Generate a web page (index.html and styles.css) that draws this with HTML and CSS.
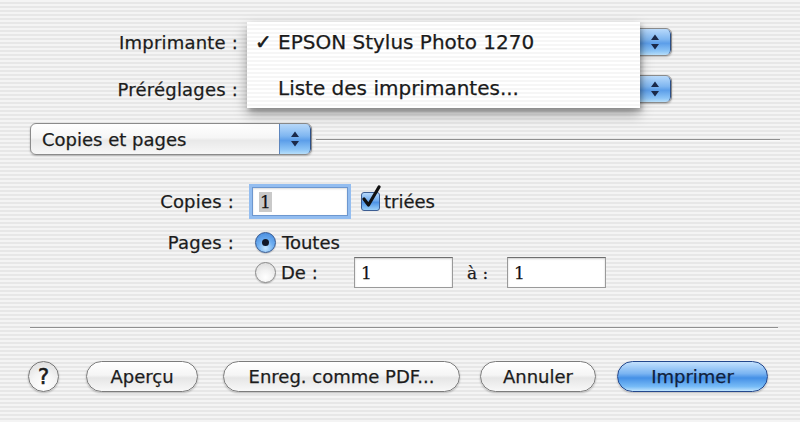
FILE: index.html
```html
<!DOCTYPE html>
<html lang="fr">
<head>
<meta charset="utf-8">
<title>Imprimer</title>
<link rel="stylesheet" href="styles.css">
</head>
<body>
<div class="win">
  <div class="row top first">
    <div class="lbl">Imprimante :</div>
    <div class="popup wide"><span class="ptext"></span><span class="step"><svg width="10" height="20" viewBox="0 0 10 20"><path d="M5 2.5 L9 8 L1 8 Z M5 17.5 L9 12 L1 12 Z" fill="#1b2a4a"/></svg></span></div>
  </div>
  <div class="row top second">
    <div class="lbl">Préréglages :</div>
    <div class="popup wide"><span class="ptext"></span><span class="step"><svg width="10" height="20" viewBox="0 0 10 20"><path d="M5 2.5 L9 8 L1 8 Z M5 17.5 L9 12 L1 12 Z" fill="#1b2a4a"/></svg></span></div>
  </div>
  <div class="row pane">
    <div class="popup narrow"><span class="ptext">Copies et pages</span><span class="step"><svg width="10" height="20" viewBox="0 0 10 20"><path d="M5 2.5 L9 8 L1 8 Z M5 17.5 L9 12 L1 12 Z" fill="#1b2a4a"/></svg></span></div>
    <div class="rule"></div>
  </div>

  <div class="form">
    <div class="frow copies">
      <div class="flbl">Copies :</div>
      <div class="ctrls">
        <div class="field focus"><span class="sel">1</span></div>
        <span class="check"><svg width="22" height="26" viewBox="0 0 22 26"><path d="M4 14 L8.5 20 L19 2" fill="none" stroke="#111" stroke-width="3.2" stroke-linecap="round" stroke-linejoin="round"/></svg></span>
        <span class="ctext">triées</span>
      </div>
    </div>
    <div class="frow pages">
      <div class="flbl">Pages :</div>
      <div class="ctrls">
        <span class="radio on"><span class="dot"></span></span>
        <span class="ctext">Toutes</span>
      </div>
    </div>
    <div class="frow de">
      <div class="flbl"></div>
      <div class="ctrls">
        <span class="radio"></span>
        <span class="ctext de-lbl">De :</span>
        <div class="field f2">1</div>
        <span class="ctext a-lbl">à :</span>
        <div class="field f2">1</div>
      </div>
    </div>
  </div>

  <div class="sep"></div>

  <div class="buttons">
    <span class="help">?</span>
    <span class="btn b-apercu">Aperçu</span>
    <span class="btn b-pdf">Enreg. comme PDF...</span>
    <span class="btn b-annuler">Annuler</span>
    <span class="btn default b-imprimer">Imprimer</span>
  </div>

  <div class="menu">
    <div class="mitem"><span class="mcheck">✓</span>EPSON Stylus Photo 1270</div>
    <div class="mitem"><span class="mcheck"></span>Liste des imprimantes...</div>
  </div>
</div>
</body>
</html>
```

FILE: styles.css
```css
* { box-sizing: border-box; }
html, body { margin: 0; padding: 0; }
body {
  width: 800px;
  height: 422px;
  overflow: hidden;
  font-family: "DejaVu Sans", "Liberation Sans", sans-serif;
  font-size: 18px;
  color: #1c1c1c;
  -webkit-text-stroke: 0.25px #1c1c1c;
  background: repeating-linear-gradient(to bottom, #f4f4f4 0 2px, #e7e7e7 2px 4px);
}
.win {
  position: relative;
  width: 800px;
  height: 422px;
  display: flex;
  flex-direction: column;
}
.row { display: flex; align-items: center; }
.row.top { height: 28px; }
.row.top.first { margin-top: 28px; }
.row.top.second { margin-top: 19px; }
.lbl {
  width: 238px;
  text-align: right;
  white-space: nowrap;
  letter-spacing: 0.2px;
}
.popup {
  display: flex;
  align-items: stretch;
  border: 1px solid #8b8b8b;
  border-radius: 6px;
  background: linear-gradient(to bottom, #ffffff 0%, #f6f6f6 45%, #e9e9e9 55%, #f7f7f7 100%);
  box-shadow: 0 1px 2px rgba(0,0,0,0.25);
  overflow: hidden;
}
.popup.wide { margin-left: 12px; width: 422px; height: 28px; }
.popup.narrow { margin-left: 30px; width: 282px; height: 32px; }
.ptext {
  flex: 1;
  display: flex;
  align-items: center;
  padding-left: 11px;
  white-space: nowrap;
}
.step {
  width: 32px;
  display: flex;
  align-items: center;
  justify-content: center;
  border-left: 1px solid #5d86be;
  border-right: 1px solid #2c4f86;
  border-radius: 0 5px 5px 0;
  background: linear-gradient(to bottom, #b9dafb 0%, #7fb6f0 40%, #5c9ee9 55%, #8cc4f6 85%, #b7def9 100%);
}
.row.pane { margin-top: 20px; height: 32px; }
.rule {
  flex: 1;
  height: 1px;
  margin-left: 4px;
  margin-right: 20px;
  background: #8f8f8f;
  box-shadow: 0 1px 0 #fafafa;
}
.form { display: flex; flex-direction: column; }
.frow { display: flex; align-items: center; }
.flbl { width: 234px; text-align: right; white-space: nowrap; letter-spacing: 0.2px; }
.ctrls { display: flex; align-items: center; margin-left: 18px; }
.frow.copies { margin-top: 32px; height: 29px; }
.frow.pages { margin-top: 15px; height: 22px; }
.frow.de { margin-top: 4px; height: 31px; }
.field {
  background: #fff;
  border: 1px solid #9a9a9a;
  border-top-color: #6f6f6f;
  box-shadow: inset 0 1px 2px rgba(0,0,0,0.2);
  height: 29px;
  display: flex;
  align-items: center;
  padding-left: 6px;
  font-family: "DejaVu Serif", "Liberation Serif", serif;
  font-size: 17px;
  color: #111;
}
.field.focus {
  width: 96px;
  border-color: #6d97cf;
  box-shadow: 0 0 0 3px #93bdf0, inset 0 1px 2px rgba(0,0,0,0.15);
}
.sel { background: #c9c9c9; padding: 0 1px; line-height: 20px; }
.field.f2 { width: 99px; height: 31px; }
.check {
  width: 19px;
  height: 19px;
  margin-left: 13px;
  border: 1px solid #3c5d92;
  border-radius: 3px;
  background: linear-gradient(to bottom, #b5d8fb 0%, #6eaaee 45%, #4d93e6 55%, #9ad0fa 100%);
  position: relative;
}
.check svg { position: absolute; left: -2px; top: -8px; }
.ctext { margin-left: 4px; white-space: nowrap; }
.radio {
  width: 21px;
  height: 21px;
  margin-left: 3px;
  border-radius: 50%;
  border: 1px solid #8a8a8a;
  background: radial-gradient(circle at 50% 75%, #ffffff 0%, #f2f2f2 40%, #d6d6d6 100%);
  box-shadow: 0 1px 1px rgba(0,0,0,0.2);
  display: flex;
  align-items: center;
  justify-content: center;
}
.radio.on {
  border-color: #33578f;
  background: radial-gradient(circle at 50% 80%, #c4e6ff 0%, #6eaef0 45%, #3e83da 100%);
}
.dot { width: 7px; height: 7px; border-radius: 50%; background: #101828; }
.pages .ctext { margin-left: 6px; }
.de-lbl { margin-left: 5px; width: 73px; }
.a-lbl { margin-left: 14px; width: 40px; font-family: "DejaVu Serif", serif; font-size: 17px; }
.sep {
  margin: 39px 22px 0 30px;
  height: 1px;
  background: #8f8f8f;
  box-shadow: 0 1px 0 #fafafa;
}
.buttons {
  display: flex;
  align-items: center;
  margin-top: 33px;
  padding-left: 28px;
  height: 31px;
}
.help {
  width: 31px;
  height: 31px;
  border-radius: 50%;
  border: 1px solid #777;
  background: radial-gradient(circle at 50% 80%, #ffffff 0%, #f4f4f4 45%, #d9d9d9 100%);
  box-shadow: 0 1px 2px rgba(0,0,0,0.25);
  display: flex;
  align-items: center;
  justify-content: center;
  font-size: 21px;
  -webkit-text-stroke: 0.6px #1c1c1c;
}
.btn {
  height: 31px;
  border-radius: 16px;
  border: 1px solid #7c7c7c;
  background: linear-gradient(to bottom, #ffffff 0%, #f5f5f5 45%, #e6e6e6 55%, #f8f8f8 100%);
  box-shadow: 0 1px 2px rgba(0,0,0,0.25);
  display: flex;
  align-items: center;
  justify-content: center;
  white-space: nowrap;
}
.b-apercu { margin-left: 27px; width: 112px; }
.b-pdf { margin-left: 25px; width: 237px; }
.b-annuler { margin-left: 20px; width: 116px; }
.b-imprimer { margin-left: 21px; width: 151px; }
.btn.default {
  border-color: #23478c;
  background: linear-gradient(to bottom, #c3e1fd 0%, #7ab4f2 40%, #4590e6 55%, #78bcf7 85%, #bfe4fd 100%);
  color: #10213d;
  -webkit-text-stroke: 0.25px #10213d;
}
.menu {
  position: absolute;
  left: 247px;
  top: 22px;
  width: 393px;
  height: 86px;
  background: repeating-linear-gradient(to bottom, #ffffff 0 2px, #f6f6f6 2px 4px);
  box-shadow: 0 6px 12px rgba(0,0,0,0.35), 2px 3px 4px rgba(0,0,0,0.2);
  font-size: 20px;
  color: #1a1a1a;
}
.mitem {
  height: 40px;
  display: flex;
  align-items: center;
  padding-left: 8px;
  white-space: nowrap;
}
.mitem + .mitem { margin-top: 6px; }
.mcheck { width: 23px; display: inline-block; -webkit-text-stroke: 0.6px #1a1a1a; }
```
